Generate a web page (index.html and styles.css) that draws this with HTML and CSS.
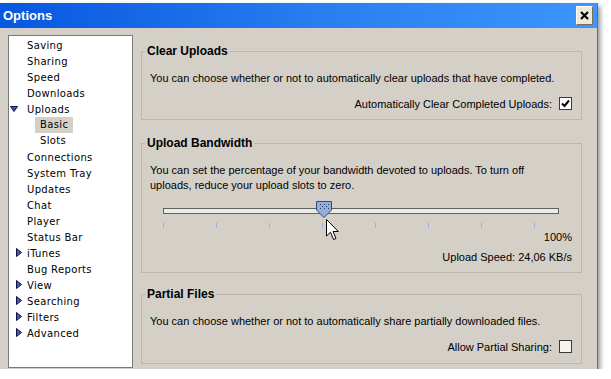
FILE: index.html
```html
<!DOCTYPE html>
<html lang="en">
<head>
    <meta charset="UTF-8">
    <meta name="viewport" content="width=device-width, initial-scale=1.0">
    <title>Options</title>
    <link rel="stylesheet" href="styles.css">
</head>
<body>

    <div class="window">
        <div class="titlebar">
            <span class="title">Options</span>
            <span class="close">
                <svg width="9" height="9" viewBox="0 0 9 9"><path d="M1 1 L8 8 M8 1 L1 8" stroke="#000" stroke-width="2.2"/></svg>
            </span>
        </div>

        <div class="body">
            <!-- Left tree of option panes -->
            <div class="tree">
                <div class="row"><span class="icon"></span>Saving</div>
                <div class="row"><span class="icon"></span>Sharing</div>
                <div class="row"><span class="icon"></span>Speed</div>
                <div class="row"><span class="icon"></span>Downloads</div>
                <div class="row"><span class="icon">
                    <svg class="open" width="8" height="6" viewBox="0 0 8 6"><polygon points="0.5,0.5 7.5,0.5 4,5.5" fill="#3a55c8" stroke="#10103a"/></svg>
                </span>Uploads</div>
                <div class="row child"><span class="sel">Basic</span></div>
                <div class="row child"><span class="leaf">Slots</span></div>
                <div class="row"><span class="icon"></span>Connections</div>
                <div class="row"><span class="icon"></span>System Tray</div>
                <div class="row"><span class="icon"></span>Updates</div>
                <div class="row"><span class="icon"></span>Chat</div>
                <div class="row"><span class="icon"></span>Player</div>
                <div class="row"><span class="icon"></span>Status Bar</div>
                <div class="row"><span class="icon"><svg class="shut" width="6" height="9" viewBox="0 0 6 9"><polygon points="0.5,0.5 5.5,4.5 0.5,8.5" fill="#3a55c8" stroke="#10103a"/></svg></span>iTunes</div>
                <div class="row"><span class="icon"></span>Bug Reports</div>
                <div class="row"><span class="icon"><svg class="shut" width="6" height="9" viewBox="0 0 6 9"><polygon points="0.5,0.5 5.5,4.5 0.5,8.5" fill="#3a55c8" stroke="#10103a"/></svg></span>View</div>
                <div class="row"><span class="icon"><svg class="shut" width="6" height="9" viewBox="0 0 6 9"><polygon points="0.5,0.5 5.5,4.5 0.5,8.5" fill="#3a55c8" stroke="#10103a"/></svg></span>Searching</div>
                <div class="row"><span class="icon"><svg class="shut" width="6" height="9" viewBox="0 0 6 9"><polygon points="0.5,0.5 5.5,4.5 0.5,8.5" fill="#3a55c8" stroke="#10103a"/></svg></span>Filters</div>
                <div class="row"><span class="icon"><svg class="shut" width="6" height="9" viewBox="0 0 6 9"><polygon points="0.5,0.5 5.5,4.5 0.5,8.5" fill="#3a55c8" stroke="#10103a"/></svg></span>Advanced</div>
            </div>

            <div class="panes">
                <fieldset class="group first">
                    <legend>Clear Uploads</legend>
                    <p>You can choose whether or not to automatically clear uploads that have completed.</p>
                    <div class="option">
                        Automatically Clear Completed Uploads:
                        <span class="check on">
                            <svg width="9" height="9" viewBox="0 0 9 9"><path d="M1 4.5 L3.5 7 L8 1.5" fill="none" stroke="#000" stroke-width="2"/></svg>
                        </span>
                    </div>
                </fieldset>

                <fieldset class="group second">
                    <legend>Upload Bandwidth</legend>
                    <p class="narrow">You can set the percentage of your bandwidth devoted to uploads. To turn off uploads, reduce your upload slots to zero.</p>
                    <div class="slider">
                        <div class="track"></div>
                        <svg class="thumb" width="16" height="17" viewBox="0 0 16 17">
                            <polygon points="0.5,0.5 15.5,0.5 15.5,9 8,16.5 0.5,9" fill="#8fb0dc" stroke="#3c4c64"/>
                            <g fill="#2c3c58">
                                <rect x="4" y="3" width="1" height="1"/><rect x="8" y="3" width="1" height="1"/><rect x="12" y="3" width="1" height="1"/>
                                <rect x="6" y="5" width="1" height="1"/><rect x="10" y="5" width="1" height="1"/>
                                <rect x="4" y="7" width="1" height="1"/><rect x="8" y="7" width="1" height="1"/><rect x="12" y="7" width="1" height="1"/>
                            </g>
                        </svg>
                        <svg class="pointer" width="13" height="22" viewBox="0 0 13 22">
                            <polygon points="0.5,0.5 0.5,17 4.5,13.2 7.5,20.5 10,19.5 7,12.5 12.3,12.5" fill="#fff" stroke="#000"/>
                        </svg>
                    </div>
                    <div class="ticks">
                        <span></span><span></span><span></span><span></span><span></span><span></span><span></span><span></span>
                    </div>
                    <div class="value">100%</div>
                    <div class="speed">Upload Speed: 24,06 KB/s</div>
                </fieldset>

                <fieldset class="group third">
                    <legend>Partial Files</legend>
                    <p>You can choose whether or not to automatically share partially downloaded files.</p>
                    <div class="option">
                        Allow Partial Sharing:
                        <span class="check"></span>
                    </div>
                </fieldset>
            </div>
        </div>
    </div>

</body>
</html>
```

FILE: styles.css
```css
body {
    margin: 0;
    padding: 0;
    background: #fff;
    font-family: "Liberation Sans", Arial, sans-serif;
}
.window {
    width: 597px;
    height: 366px;
    margin-top: 3px;
    background: #d4d0c8;
    border-right: 1px solid #6f6d68;
    box-shadow: 2px 3px 5px rgba(0, 0, 0, 0.45);
    display: flex;
    flex-direction: column;
}
.titlebar {
    height: 25px;
    background: linear-gradient(to right, #0757e0, #2a7ff0 55%, #3c96fe);
    display: flex;
    align-items: center;
    justify-content: space-between;
    padding: 0 4px 0 3px;
}
.title {
    color: #fff;
    font-weight: bold;
    font-size: 13px;
}
.close {
    width: 15px;
    height: 17px;
    background: #ece9d8;
    border: 1px solid;
    border-color: #fff #716f64 #716f64 #fff;
    display: flex;
    align-items: center;
    justify-content: center;
}
.body {
    flex: 1;
    display: flex;
    gap: 8px;
    padding: 7px 0 1px 8px;
}
.tree {
    width: 123px;
    background: #fff;
    border: 1px solid #7a7a7a;
    padding-top: 1px;
    font-family: "DejaVu Sans", Verdana, sans-serif;
    font-size: 10px;
    letter-spacing: 0.35px;
    color: #000;
}
.row {
    height: 16px;
    display: flex;
    align-items: center;
}
.icon {
    width: 18px;
    height: 16px;
    position: relative;
}
.icon .open {
    position: absolute;
    left: 1px;
    top: 5px;
}
.icon .shut {
    position: absolute;
    left: 7px;
    top: 3px;
}
.child {
    padding-left: 26px;
}
.sel, .leaf {
    padding: 0 5px;
    height: 16px;
    line-height: 16px;
}
.sel {
    background: #d4d0c8;
}
.panes {
    width: 441px;
    padding-top: 9px;
    display: flex;
    flex-direction: column;
}
.group {
    margin: 0;
    min-width: 0;
    border: 1px solid #bcb8af;
    padding: 0 9px 8px 8px;
    font-size: 11px;
    color: #000;
}
.group legend {
    font-size: 12px;
    font-weight: bold;
    line-height: 14px;
    padding: 0 2px;
    margin-left: -5px;
}
.group p {
    margin: 13px 0 0;
    line-height: 15px;
}
.group p.narrow {
    max-width: 395px;
}
.second {
    margin-top: 16px;
}
.third {
    margin-top: 14px;
    padding-bottom: 9px;
}
.option {
    margin-top: 10px;
    height: 15px;
    display: flex;
    align-items: center;
    justify-content: flex-end;
    gap: 7px;
}
.check {
    width: 11px;
    height: 11px;
    border: 1px solid #3a3a3a;
    background: #f4f3ee;
    display: flex;
    align-items: center;
    justify-content: center;
}
.check.on {
    background: #fff;
}
.slider {
    position: relative;
    height: 17px;
    margin: 8px 0 0 13px;
    width: 396px;
}
.track {
    position: absolute;
    left: 0;
    right: 0;
    top: 7px;
    height: 4px;
    border: 1px solid #5f6360;
    background: #ecebe6;
}
.thumb {
    position: absolute;
    left: 153px;
    top: 0;
}
.pointer {
    position: absolute;
    left: 163px;
    top: 18px;
}
.ticks {
    display: flex;
    margin: 5px 0 0 13px;
    height: 5px;
}
.ticks span {
    width: 1px;
    height: 5px;
    background: #90b4dc;
    margin-right: 52px;
}
.ticks span:last-child {
    margin-right: 0;
}
.value, .speed {
    text-align: right;
    line-height: 14px;
}
.value {
    margin-top: 2px;
}
.speed {
    margin-top: 6px;
}
```
